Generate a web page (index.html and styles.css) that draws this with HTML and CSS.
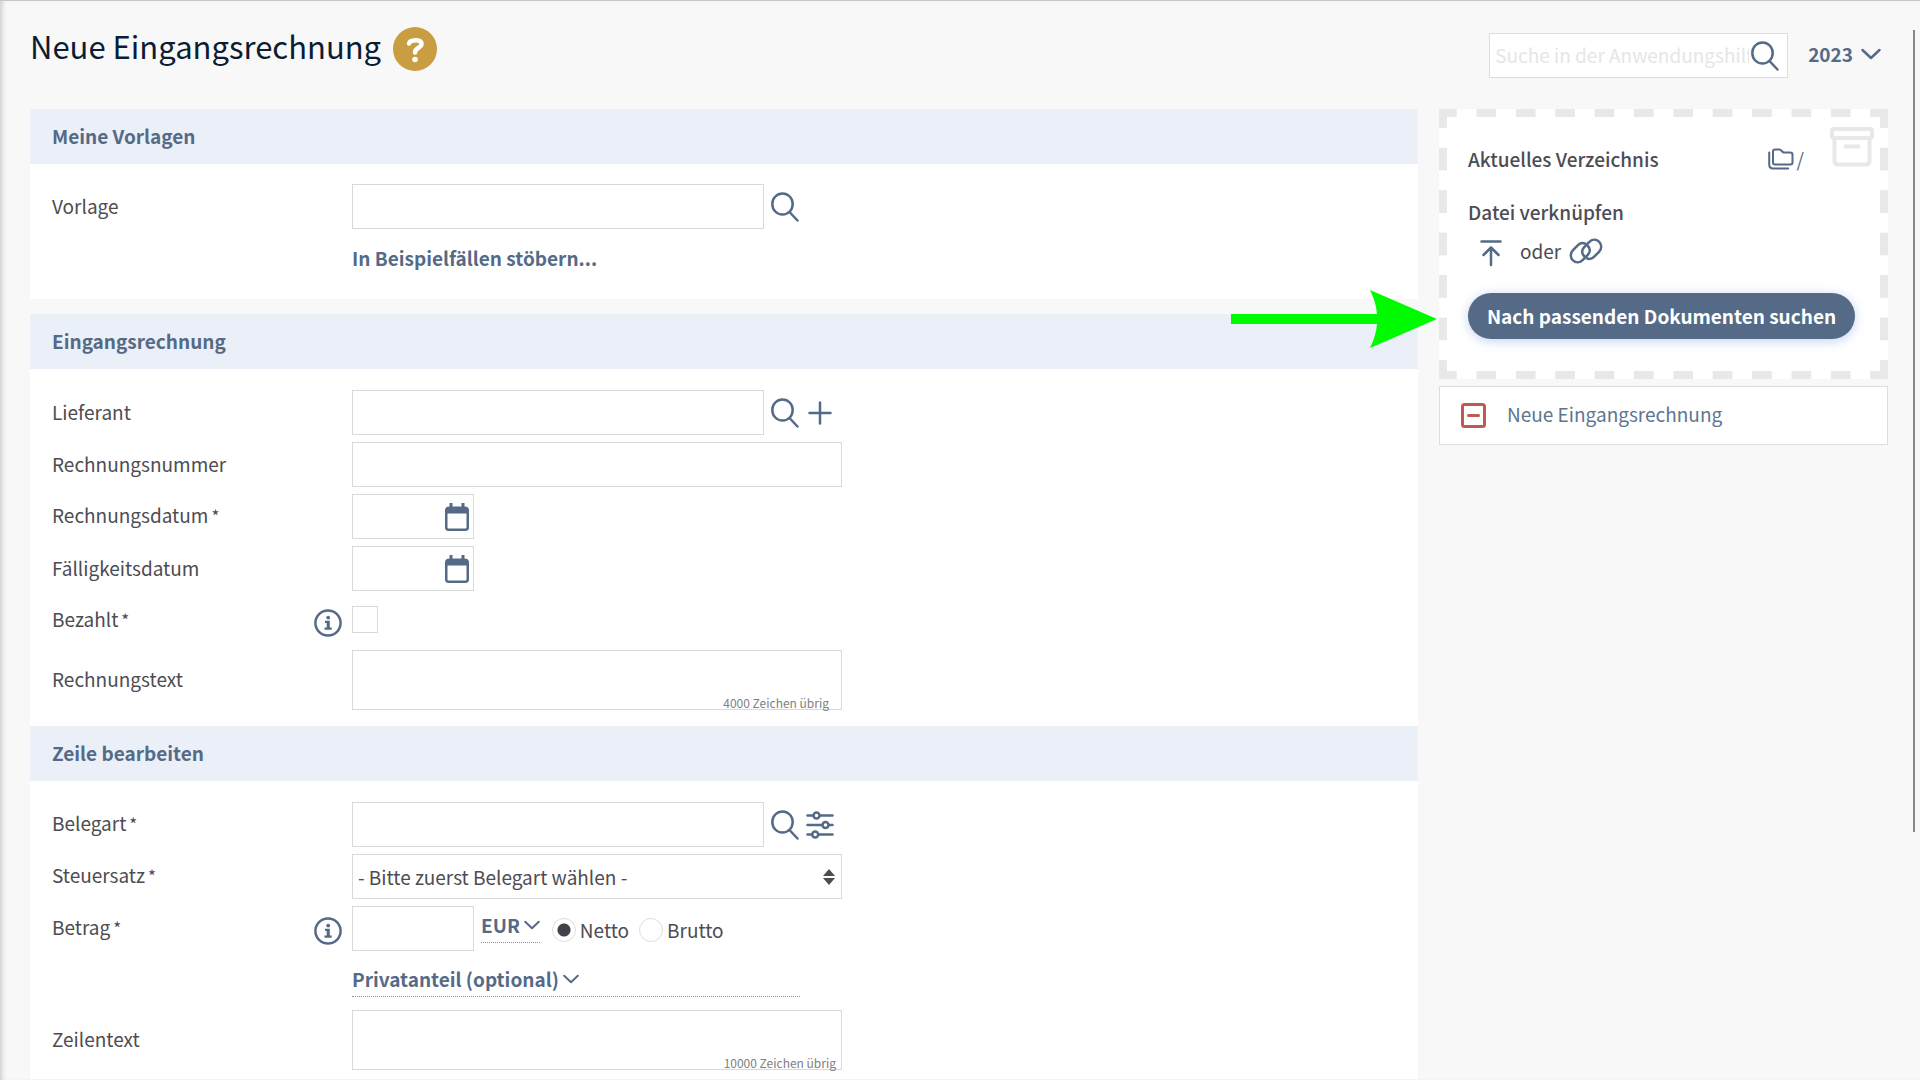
FILE: index.html
```html
<!DOCTYPE html>
<html lang="de">
<head>
<meta charset="utf-8">
<meta name="viewport" content="width=device-width, initial-scale=1">
<title>Neue Eingangsrechnung</title>
<link rel="stylesheet" href="styles.css">
</head>
<body>
<svg class="sprite" aria-hidden="true">
  <symbol id="i-search" viewBox="0 0 28 30"><ellipse cx="11.500" cy="12" rx="10.200" ry="10.600"/><path d="M18.500 20l8 8.500"/></symbol>
  <symbol id="i-chevron" viewBox="0 0 20 12"><path d="M1.500 2l8.500 8 8.500-8"/></symbol>
  <symbol id="i-info" viewBox="0 0 28 28"><circle cx="14" cy="14" r="12.600"/><circle class="solid" cx="14.200" cy="8.600" r="1.900"/><path class="solid" d="M11 11.800h4.800v6.700h1.900v2.300h-7.200v-2.300h2.200v-4.400H11z"/></symbol>
  <symbol id="i-calendar" viewBox="0 0 26 30"><path class="solid" d="M5.500 1h3v3.500h9V1h3v3.500c3 0 4.500 1.200 4.500 4v17c0 2.200-1.200 3.500-3.500 3.500h-17C2.200 29 1 27.700 1 25.500v-17c0-2.800 1.500-4 4.500-4zM3.500 11.500V25c0 1 .5 1.500 1.500 1.500h16c1 0 1.500-.5 1.500-1.500V11.500z"/></symbol>
</svg>

<div class="page">
  <header class="topbar">
    <h1 class="title">Neue Eingangsrechnung</h1>
    <button class="help" type="button" aria-label="Hilfe">
      <svg viewBox="0 0 44 44"><circle cx="22" cy="22" r="22" fill="#c99d41"/><path d="M16 16.500c1-3.700 12.500-5 12.500.5 0 4-6.500 3.500-6.500 8.500" fill="none" stroke="#fff" stroke-width="4.500" stroke-linecap="round"/><circle cx="22" cy="32.500" r="2.800" fill="#fff"/></svg>
    </button>
    <form class="search" role="search">
      <input class="search-input" type="text" placeholder="Suche in der Anwendungshilfe" aria-label="Suche in der Anwendungshilfe">
      <button class="icon-btn" type="button" aria-label="Suchen"><svg class="icon search-icon"><use href="#i-search"/></svg></button>
    </form>
    <button class="year" type="button">2023 <svg class="icon chevron-lg"><use href="#i-chevron"/></svg></button>
  </header>

  <div class="columns">
    <main class="main">
      <section class="card card-spaced">
        <h2 class="card-head">Meine Vorlagen</h2>
        <div class="rows">
          <div class="row">
            <label class="label" for="vorlage">Vorlage</label>
            <div class="field">
              <input class="box w-pick" id="vorlage" type="text">
              <button class="icon-btn" type="button" aria-label="Vorlage suchen"><svg class="icon search-icon"><use href="#i-search"/></svg></button>
            </div>
          </div>
          <div class="row">
            <div class="field field-only"><a class="link" href="#beispiele">In Beispielfällen stöbern...</a></div>
          </div>
        </div>
      </section>

      <section class="card">
        <h2 class="card-head">Eingangsrechnung</h2>
        <div class="rows">
          <div class="row">
            <label class="label" for="lieferant">Lieferant</label>
            <div class="field">
              <input class="box w-pick" id="lieferant" type="text">
              <button class="icon-btn" type="button" aria-label="Lieferant suchen"><svg class="icon search-icon"><use href="#i-search"/></svg></button>
              <button class="icon-btn" type="button" aria-label="Lieferant anlegen"><svg class="icon action-icon" viewBox="0 0 28 28"><path d="M3.500 14h21M14 3.500v21"/></svg></button>
            </div>
          </div>
          <div class="row">
            <label class="label" for="nummer">Rechnungsnummer</label>
            <div class="field"><input class="box w-full" id="nummer" type="text"></div>
          </div>
          <div class="row">
            <label class="label" for="datum">Rechnungsdatum<span class="req">*</span></label>
            <div class="field"><div class="box date"><input class="date-input" id="datum" type="text"><button class="icon-btn" type="button" aria-label="Kalender"><svg class="icon calendar"><use href="#i-calendar"/></svg></button></div></div>
          </div>
          <div class="row">
            <label class="label" for="faellig">Fälligkeitsdatum</label>
            <div class="field"><div class="box date"><input class="date-input" id="faellig" type="text"><button class="icon-btn" type="button" aria-label="Kalender"><svg class="icon calendar"><use href="#i-calendar"/></svg></button></div></div>
          </div>
          <div class="row">
            <label class="label" for="bezahlt">Bezahlt<span class="req">*</span></label>
            <button class="icon-btn info" type="button" aria-label="Info"><svg class="icon info-icon"><use href="#i-info"/></svg></button>
            <div class="field"><input class="check" id="bezahlt" type="checkbox"></div>
          </div>
          <div class="row row-tall">
            <label class="label" for="text">Rechnungstext</label>
            <div class="field area-wrap"><textarea class="box area w-full" id="text"></textarea><span class="counter">4000 Zeichen übrig</span></div>
          </div>
        </div>
      </section>

      <section class="card card-last">
        <h2 class="card-head">Zeile bearbeiten</h2>
        <div class="rows">
          <div class="row">
            <label class="label" for="belegart">Belegart<span class="req">*</span></label>
            <div class="field">
              <input class="box w-pick" id="belegart" type="text">
              <button class="icon-btn" type="button" aria-label="Belegart suchen"><svg class="icon search-icon"><use href="#i-search"/></svg></button>
              <button class="icon-btn" type="button" aria-label="Optionen"><svg class="icon action-icon" viewBox="0 0 28 28"><path d="M1.500 4.500h6M14 4.500h12.500M1.500 14h14.500M23 14h3.500M1.500 23.500h4.500M12.500 23.500h14"/><circle cx="10.500" cy="4.500" r="3"/><circle cx="19.500" cy="14" r="3"/><circle cx="9.200" cy="23.500" r="3"/></svg></button>
            </div>
          </div>
          <div class="row">
            <label class="label" for="steuer">Steuersatz<span class="req">*</span></label>
            <div class="field select-wrap">
              <select class="box select w-full" id="steuer"><option>- Bitte zuerst Belegart wählen -</option></select>
              <svg class="sorter" viewBox="0 0 12 16" aria-hidden="true"><path d="M0 7l6-7 6 7zM0 9h12l-6 7z" fill="#4d4c53"/></svg>
            </div>
          </div>
          <div class="row">
            <label class="label" for="betrag">Betrag<span class="req">*</span></label>
            <button class="icon-btn info" type="button" aria-label="Info"><svg class="icon info-icon"><use href="#i-info"/></svg></button>
            <div class="field">
              <input class="box w-short" id="betrag" type="text">
              <button class="toggle currency" type="button">EUR<svg class="icon chevron"><use href="#i-chevron"/></svg></button>
              <label class="radio-label"><input class="radio" type="radio" name="art" checked>Netto</label>
              <label class="radio-label"><input class="radio" type="radio" name="art">Brutto</label>
            </div>
          </div>
          <div class="row">
            <div class="field field-only"><button class="toggle private" type="button">Privatanteil (optional)<svg class="icon chevron"><use href="#i-chevron"/></svg></button></div>
          </div>
          <div class="row row-tall">
            <label class="label" for="zeilentext">Zeilentext</label>
            <div class="field area-wrap"><textarea class="box area w-full" id="zeilentext"></textarea><span class="counter counter-wide">10000 Zeichen übrig</span></div>
          </div>
        </div>
      </section>
    </main>

    <aside class="side">
      <section class="drop">
        <svg class="archive" viewBox="0 0 44 40" aria-hidden="true"><rect x="2" y="2" width="40" height="9" rx="2"/><path d="M4.500 11v23c0 2 1.500 3.500 3.500 3.500h28c2 0 3.500-1.500 3.500-3.500V11"/><path d="M15.500 19.500h13" stroke-linecap="round"/></svg>
        <div class="dir">
          <h3 class="side-head">Aktuelles Verzeichnis</h3>
          <a class="path" href="#verzeichnis"><svg class="icon folders" viewBox="0 0 26 22"><path d="M5 3.500C5 2 6 1.500 7 1.500h4.500c2 0 2.500 3 4.500 3h6c1.500 0 2.500.8 2.500 2v8c0 1.300-.8 2-2 2H7c-1.300 0-2-.7-2-2zM1.200 4.500v12c0 2.500 1.500 4 4 4h15"/></svg>/</a>
        </div>
        <h3 class="side-head">Datei verknüpfen</h3>
        <div class="attach">
          <button class="icon-btn upload-btn" type="button" aria-label="Hochladen"><svg class="icon upload" viewBox="0 0 22 28"><path d="M1.500 2.500h19M11 26V9M3.500 16L11 8.500l7.500 7.500"/></svg></button>
          <span class="or">oder</span>
          <button class="icon-btn" type="button" aria-label="Verknüpfen"><svg class="icon chain" viewBox="0 0 34 28"><path d="M18.600 8.800c3 2.700 2.900 6.300.2 9.100l-4.900 5c-2.900 2.900-7 3.200-9.900.5-3-2.900-2.900-7.200 0-10.200l5-5c2-2 4.500-2.500 6.800-1.700"/><path d="M15.400 19.200c-3-2.700-2.900-6.300-.2-9.100l4.900-5c2.900-2.900 7-3.200 9.900-.5 3 2.900 2.900 7.200 0 10.200l-5 5c-2 2-4.500 2.500-6.800 1.700"/></svg></button>
        </div>
        <button class="primary" type="button">Nach passenden Dokumenten suchen</button>
      </section>
      <a class="entry" href="#eingangsrechnung">
        <svg class="minus" viewBox="0 0 25 25" aria-hidden="true"><rect x="1.500" y="1.500" width="22" height="22" rx="2"/><path d="M7.500 12.500h10" stroke-linecap="round"/></svg>
        <span class="entry-text">Neue Eingangsrechnung</span>
      </a>
    </aside>
  </div>

  <svg class="arrow" viewBox="0 0 206 58" aria-hidden="true"><path d="M0 24h146q-1-12-7-24l67 29-67 29q6-12 7-24H0z" fill="#00fb00"/></svg>
  <div class="scroll-thumb" aria-hidden="true"></div>
</div>
</body>
</html>
```
FILE: styles.css
```css
* { box-sizing: border-box; }

body {
  margin: 0;
  background: #f8f8f8;
  color: #4d4c53;
  font: 19px/28px "Noto Sans CJK SC", "Noto Sans", sans-serif;
}

h1, h2, h3 { margin: 0; }
button, input, select, textarea { font: inherit; color: inherit; margin: 0; }
button { border: 0; padding: 0; background: none; cursor: pointer; }
a { text-decoration: none; }

.sprite { display: none; }

.page {
  position: relative;
  min-height: 100vh;
  padding: 0 32px 0 30px;
  border-top: 1px solid #c8c8c8;
  box-shadow: inset 5px 0 5px -3px #ccc;
}

.icon {
  display: block;
  fill: none;
  stroke: #546a87;
  stroke-width: 2.5;
  stroke-linecap: round;
  stroke-linejoin: round;
}
.icon-btn { display: flex; flex: none; }
.solid { fill: #546a87; stroke: none; }
.search-icon { width: 28px; height: 30px; }
.action-icon { width: 28px; height: 28px; }
.calendar { width: 26px; height: 30px; }
.info-icon { width: 28px; height: 28px; }
.chevron { width: 16px; height: 10px; }
.chevron-lg { width: 20px; height: 12px; }

/* Top bar */
.topbar { display: flex; align-items: flex-start; height: 108px; padding-top: 26px; }
.title { font-size: 31px; line-height: 38px; font-weight: 400; color: #0b1c33; }
.help { display: flex; width: 44px; height: 44px; margin-left: 12px; }
.help svg { width: 44px; height: 44px; }
.search {
  display: flex;
  align-items: center;
  width: 299px;
  height: 45px;
  margin: 6px 20px 0 auto;
  padding: 0 8px 0 5px;
  border: 1px solid #ddd;
  background: #fff;
}
.search-input { flex: 1; min-width: 0; height: 28px; margin: 0 2px 2px 0; padding: 0; border: 0; outline: 0; background: none; }
.search-input::placeholder { color: #e6e6e6; opacity: 1; }
.year { display: flex; align-items: center; gap: 8px; height: 42px; margin: 6px 7px 0 0; font-weight: 700; color: #546a87; }

.columns { display: grid; grid-template-columns: minmax(0, 1fr) 449px; gap: 21px; align-items: start; }

/* Form cards */
.card { background: #fff; }
.card-spaced { margin-bottom: 15px; }
.card-head {
  height: 55px;
  padding: 0 22px;
  background: #ebeff7;
  font-size: 19px;
  line-height: 53px;
  font-weight: 700;
  color: #546a87;
}
.rows { display: grid; gap: 7px; padding: 21px 22px 16px; }
.card-spaced .rows { padding-top: 20px; padding-bottom: 18px; }
.card-last .rows { padding-bottom: 9px; }
.row { display: grid; grid-template-columns: 262px 38px minmax(0, 1fr); align-items: center; min-height: 45px; }
.row-tall { min-height: 60px; }
.label { grid-column: 1; padding-bottom: 2px; }
.req { margin-left: 3px; font-size: 17px; }
.info { grid-column: 2; padding-top: 4px; }
.field { grid-column: 3; display: flex; align-items: center; gap: 7px; }

.box { height: 45px; border: 1px solid #d9d9d9; border-radius: 0; background: #fff; outline: 0; padding: 0 5px; }
.w-pick { width: 412px; }
.w-full { width: 490px; }
.w-short { width: 122px; }
.date { display: flex; align-items: center; width: 122px; padding: 0 3px; }
.date-input { flex: 1; min-width: 0; border: 0; padding: 0; outline: 0; background: none; }
.link { padding-bottom: 2px; font-weight: 700; color: #546a87; }
.check { appearance: none; width: 26px; height: 27px; margin-bottom: 3px; border: 1px solid #d9d9d9; background: #fff; }

.area-wrap, .select-wrap { position: relative; width: 490px; }
.area { display: block; height: 60px; resize: none; }
.counter { position: absolute; right: 13px; bottom: 0; font-size: 12px; line-height: 14px; color: #808080; }
.counter-wide { right: 6px; }
.select { appearance: none; }
.sorter { position: absolute; right: 7px; top: 15px; width: 12px; height: 16px; pointer-events: none; }

.toggle { display: flex; align-items: center; gap: 4px; height: 32px; margin-bottom: 4px; padding-bottom: 2px; border-bottom: 1px dotted #8696ab; font-weight: 700; color: #546a87; }
.currency { margin-right: 5px; }
.private { width: 448px; margin-bottom: 0; }
.radio-label { display: flex; align-items: center; gap: 4px; margin-right: 3px; padding-top: 3px; }
.radio { appearance: none; width: 24px; height: 24px; border: 1px solid #ddd; border-radius: 50%; background: #fff; }
.radio:checked { background: radial-gradient(circle, #43424b 6px, #fff 7px); }

/* Document panel */
.side { display: grid; gap: 7px; }
.drop {
  --line: #e8e8e8;
  --h: linear-gradient(90deg, var(--line) 24%, transparent 24% 76%, var(--line) 76%);
  --v: linear-gradient(transparent 24%, var(--line) 24% 76%, transparent 76%);
  position: relative;
  height: 270px;
  padding: 36px 33px 0 29px;
  background:
    var(--h) center top / calc(100% / 11.4) 8px repeat-x,
    var(--h) center bottom / calc(100% / 11.4) 8px repeat-x,
    var(--v) left center / 8px calc(100% / 6.36) repeat-y,
    var(--v) right center / 8px calc(100% / 6.36) repeat-y,
    #fff;
}
.archive { position: absolute; top: 18px; right: 14px; width: 44px; height: 40px; fill: none; stroke: #e8e8e8; stroke-width: 4; }
.dir { display: flex; justify-content: space-between; margin-bottom: 25px; padding-right: 51px; }
.side-head { font-size: 19px; line-height: 28px; font-weight: 500; }
.path { display: flex; align-items: center; gap: 3px; color: #546a87; }
.folders { width: 26px; height: 22px; stroke-width: 2; }
.attach { display: flex; align-items: center; height: 40px; margin-top: 5px; padding-left: 12px; }
.upload-btn { padding-top: 4px; }
.upload { width: 22px; height: 28px; }
.or { margin: 0 8px 0 18px; }
.chain { width: 34px; height: 28px; }
.primary {
  width: 100%;
  height: 46px;
  margin-top: 22px;
  border-radius: 23px;
  background: #546a87;
  box-shadow: 0 2px 12px #c3d3ee;
  font-weight: 700;
  color: #fff;
}
.entry { display: flex; align-items: center; gap: 21px; height: 59px; padding: 0 21px; border: 1px solid #ddd; background: #fff; color: #5e7591; }
.entry-text { padding-bottom: 3px; }
.minus { width: 25px; height: 25px; fill: none; stroke: #c05a50; stroke-width: 3; }

/* Pointer over the page and scroll thumb */
.arrow { position: absolute; top: 289px; right: 483px; width: 206px; height: 58px; }
.scroll-thumb { position: absolute; top: 29px; right: 5px; width: 2px; height: 802px; background: #888; }
```
